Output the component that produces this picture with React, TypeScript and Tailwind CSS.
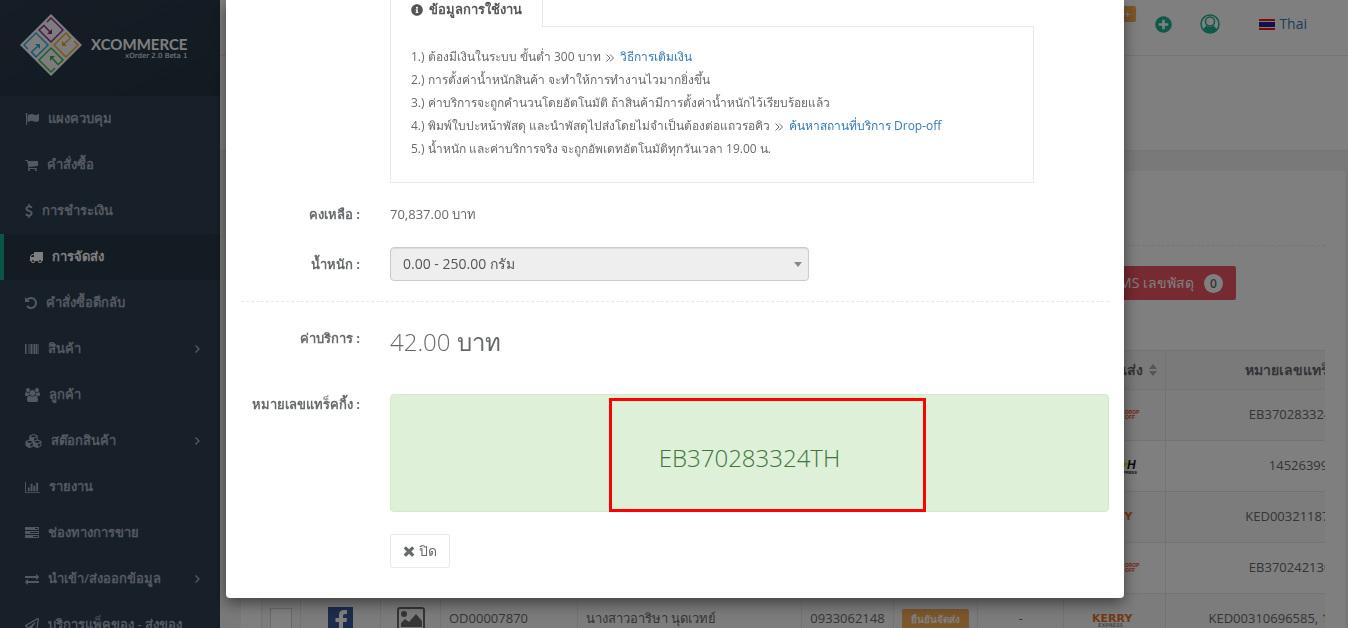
import React from 'react';
import { FaCubes, FaInfoCircle, FaPlusCircle, FaRegPaperPlane } from 'react-icons/fa';

interface MenuItem {
  label: string;
  icon: React.ReactNode;
  active?: boolean;
  expandable?: boolean;
}

interface ShippingRow {
  courier: 'dropoff' | 'flash' | 'kerry';
  tracking: string;
  order?: string;
  customer?: string;
  phone?: string;
  status?: string;
}

// Icon with a 1792 unit grid, cropped to its own width
function Glyph({ d, box = '0 0 1792 1792', className }: { d: string; box?: string; className: string }) {
  return (
    <svg viewBox={box} className={className} fill="currentColor" aria-hidden="true">
      <path d={d} />
    </svg>
  );
}

const paths = {
  flag: 'M320 256q0 72-64 110v1266q0 13-9.500 22.500t-22.500 9.500h-64q-13 0-22.500-9.500t-9.500-22.500v-1266q-64-38-64-110 0-53 37.500-90.500t90.500-37.500 90.500 37.500 37.500 90.500zm1472 64v763q0 25-12.500 38.500t-39.500 27.500q-215 116-369 116-61 0-123.500-22t-108.500-48-115.500-48-142.500-22q-192 0-464 146-17 9-33 9-26 0-45-19t-19-45v-742q0-32 31-55 21-14 79-43 236-120 421-120 107 0 200 29t219 88q38 19 88 19 54 0 117.500-21t110-47 88-47 54.500-21q26 0 45 19t19 45z',
  cart: 'M704 1536q0 52-38 90t-90 38-90-38-38-90 38-90 90-38 90 38 38 90zm896 0q0 52-38 90t-90 38-90-38-38-90 38-90 90-38 90 38 38 90zm128-1088v512q0 24-16.500 42.500t-40.500 21.500l-1044 122q13 60 13 70 0 16-24 64h920q26 0 45 19t19 45-19 45-45 19h-1024q-26 0-45-19t-19-45q0-11 8-31.500t16-36 21.500-40 15.500-29.500l-177-823h-204q-26 0-45-19t-19-45 19-45 45-19h256q16 0 28.500 6.500t19.500 15.500 13 24.500 8 26 5.500 29.500 4.500 26h1201q26 0 45 19t19 45z',
  dollar: 'M1362 1185q0 153-99.500 263.500t-258.500 136.500v175q0 14-9 23t-23 9h-135q-13 0-22.500-9.500t-9.500-22.500v-175q-66-9-127.500-31t-101.500-44.500-74-48-46.500-37.500-17.500-18q-17-21-2-41l103-135q7-10 23-12 15-2 24 9l2 2q113 99 243 125 37 8 74 8 81 0 142.500-43t61.500-122q0-28-15-53t-33.500-42-58.500-37.500-66-32-80-32.500q-39-16-61.500-25t-61.500-26.500-62.500-31-56.500-35.500-53.500-42.500-43.500-49-35.500-58-21-66.500-8.500-78q0-138 98-242t255-134v-180q0-13 9.500-22.500t22.500-9.500h135q14 0 23 9t9 23v176q57 6 110.500 23t87 33.500 63.500 37.500 39 29 15 14q17 18 5 38l-81 146q-8 15-23 16-14 3-27-7-3-3-14.500-12t-39-26.500-58.500-32-74.500-26-85.500-11.500q-95 0-155 43t-60 111q0 26 8.500 48t29.500 41.500 39.500 33 56 31 60.500 27 70 27.500q53 20 81 31.500t76 35 75.500 42.500 62 50 53 63.500 31.500 76.500 13 94z',
  truck: 'M640 1408q0-52-38-90t-90-38-90 38-38 90 38 90 90 38 90-38 38-90zm-384-512h384v-256h-158q-13 0-22 9l-195 195q-9 9-9 22v30zm1280 512q0-52-38-90t-90-38-90 38-38 90 38 90 90 38 90-38 38-90zm256-1088v1024q0 15-4 26.500t-13.500 18.500-16.500 11.500-23.500 6-22.500 2-25.500 0-22.500-.5q0 106-75 181t-181 75-181-75-75-181h-384q0 106-75 181t-181 75-181-75-75-181h-64q-3 0-22.500.5t-25.500 0-22.500-2-23.500-6-16.500-11.500-13.500-18.500-4-26.500q0-26 19-45t45-19v-320q0-8-.5-35t0-38 2.500-34.500 6.500-37 14-30.500 22.500-30l198-198q19-19 50.500-32t58.500-13h160v-192q0-26 19-45t45-19h1024q26 0 45 19t19 45z',
  undo: 'M1664 896q0 156-61 298t-164 245-245 164-298 61q-172 0-327-72.500t-264-204.500q-7-10-6.500-22.500t8.500-20.500l137-138q10-9 25-9 16 2 23 12 73 95 179 147t225 52q104 0 198.500-40.500t163.500-109.500 109.500-163.500 40.500-198.500-40.500-198.500-109.500-163.500-163.500-109.500-198.500-40.500q-98 0-188 35.500t-160 101.500l137 138q31 30 14 69-17 40-59 40h-448q-26 0-45-19t-19-45v-448q0-42 40-59 39-17 69 14l130 129q107-101 244.500-156.500t284.500-55.500q156 0 298 61t245 164 164 245 61 298z',
  barcode: 'M0 256h128v1280h-128zM192 256h64v1280h-64zM384 256h64v1280h-64zM576 256h64v1280h-64zM704 256h192v1280h-192zM960 256h64v1280h-64zM1088 256h192v1280h-192zM1344 256h192v1280h-192zM1600 256h64v1280h-64zM1728 256h64v1280h-64z',
  users: 'M657 896q-162 5-265 128h-134q-82 0-138-40.500t-56-118.500q0-353 124-353 6 0 43.500 21t97.500 42.500 119 21.500q67 0 133-23-5 37-5 66 0 139 81 256zm1071 637q0 120-73 189.500t-194 69.500h-874q-121 0-194-69.500t-73-189.500q0-53 3.500-103.500t14-109 26.500-108.500 43-97.500 62-81 85.500-53.500 111.500-20q10 0 43 21.500t73 48 107 48 135 21.500 135-21.500 107-48 73-48 43-21.500q61 0 111.500 20t85.500 53.500 62 81 43 97.500 26.500 108.500 14 109 3.500 103.500zm-1024-1277q0 106-75 181t-181 75-181-75-75-181 75-181 181-75 181 75 75 181zm704 384q0 159-112.500 271.500t-271.500 112.500-271.500-112.500-112.500-271.500 112.500-271.500 271.500-112.500 271.500 112.500 112.500 271.500zm576 225q0 78-56 118.500t-138 40.500h-134q-103-123-265-128 81-117 81-256 0-29-5-66 66 23 133 23 59 0 119-21.500t97.500-42.500 43.500-21q124 0 124 353zm-128-609q0 106-75 181t-181 75-181-75-75-181 75-181 181-75 181 75 75 181z',
  chart: 'M640 896v512h-256v-512h256zm384-512v1024h-256v-1024h256zm1024 1152v128h-2048v-1536h128v1408h1920zm-640-896v768h-256v-768h256zm384-384v1152h-256v-1152h256z',
  tasks: 'M1024 1408h640v-128h-640v128zm-384-512h1024v-128h-1024v128zm640-512h384v-128h-384v128zm512 832v256q0 26-19 45t-45 19h-1664q-26 0-45-19t-19-45v-256q0-26 19-45t45-19h1664q26 0 45 19t19 45zm0-512v256q0 26-19 45t-45 19h-1664q-26 0-45-19t-19-45v-256q0-26 19-45t45-19h1664q26 0 45 19t19 45zm0-512v256q0 26-19 45t-45 19h-1664q-26 0-45-19t-19-45v-256q0-26 19-45t45-19h1664q26 0 45 19t19 45z',
  exchange: 'M1792 1184v192q0 13-9.500 22.500t-22.500 9.500h-1376v192q0 13-9.500 22.500t-22.500 9.500q-12 0-24-10l-319-320q-9-9-9-22 0-14 9-23l320-320q9-9 23-9 13 0 22.500 9.500t9.500 22.500v192h1376q13 0 22.500 9.500t9.500 22.500zm0-544q0 14-9 23l-320 320q-9 9-23 9-13 0-22.500-9.500t-9.500-22.500v-192h-1376q-13 0-22.500-9.500t-9.500-22.500v-192q0-13 9.500-22.500t22.500-9.500h1376v-192q0-14 9-23t23-9q12 0 24 10l319 319q9 9 9 23z',
  times: 'M1490 1322q0 40-28 68l-136 136q-28 28-68 28t-68-28l-294-294-294 294q-28 28-68 28t-68-28l-136-136q-28-28-28-68t28-68l294-294-294-294q-28-28-28-68t28-68l136-136q28-28 68-28t68 28l294 294 294-294q28-28 68-28t68 28l136 136q28 28 28 68t-28 68l-294 294 294 294q28 28 28 68z',
};

const menu: MenuItem[] = [
  { label: 'แผงควบคุม', icon: <Glyph d={paths.flag} className="h-3.5 w-3.5" /> },
  { label: 'คำสั่งซื้อ', icon: <Glyph d={paths.cart} box="64 0 1664 1792" className="h-3.5 w-[13px]" /> },
  { label: 'การชำระเงิน', icon: <Glyph d={paths.dollar} box="384 0 1024 1792" className="h-3.5 w-2" /> },
  { label: 'การจัดส่ง', icon: <Glyph d={paths.truck} className="h-3.5 w-3.5" />, active: true },
  { label: 'คำสั่งซื้อตีกลับ', icon: <Glyph d={paths.undo} box="128 0 1536 1792" className="h-3.5 w-3" /> },
  { label: 'สินค้า', icon: <Glyph d={paths.barcode} className="h-3.5 w-3.5" />, expandable: true },
  { label: 'ลูกค้า', icon: <Glyph d={paths.users} box="64 0 1920 1792" className="h-3.5 w-[15px]" /> },
  { label: 'สต๊อกสินค้า', icon: <FaCubes className="h-4 w-[17px]" />, expandable: true },
  { label: 'รายงาน', icon: <Glyph d={paths.chart} box="0 0 2048 1792" className="h-[13px] w-[15px]" /> },
  { label: 'ช่องทางการขาย', icon: <Glyph d={paths.tasks} className="h-3.5 w-3.5" /> },
  { label: 'นำเข้า/ส่งออกข้อมูล', icon: <Glyph d={paths.exchange} className="h-3.5 w-3.5" />, expandable: true },
  { label: 'บริการแพ็คของ - ส่งของ', icon: <FaRegPaperPlane className="h-3.5 w-3.5" /> },
];

const rows: ShippingRow[] = [
  { courier: 'dropoff', tracking: 'EB370283324TH' },
  { courier: 'flash', tracking: '14526399' },
  { courier: 'kerry', tracking: 'KED00321187452' },
  { courier: 'dropoff', tracking: 'EB370242130TH' },
  {
    courier: 'kerry',
    tracking: 'KED00310696585, 145263991',
    order: 'OD00007870',
    customer: 'นางสาวอาริษา นุดเวทย์',
    phone: '0933062148',
    status: 'ยืนยันจัดส่ง',
  },
];

function Logo() {
  return (
    <svg viewBox="0 0 62 62" className="h-[62px] w-[62px] shrink-0" aria-hidden="true">
      <path d="M31 0 62 31 31 62 0 31z" fill="#fafafa" />
      <g fill="none" strokeWidth="1.400">
        <path d="M27 8 31 4 43 16 31 28 19 16 24 11.500 30 18" stroke="#92278f" />
        <path d="M54 27 58 31 46 43 34 31 46 19 50.500 24 44 30" stroke="#f7a823" />
        <path d="M8 35 4 31 16 19 28 31 16 43 11.500 38 18 32" stroke="#27a9e0" />
        <path d="M35 54 31 58 19 46 31 34 43 46 38 50.500 32 44" stroke="#39b54a" />
      </g>
      <path d="M32 15v5h-5z" fill="#92278f" />
      <path d="M42 27v5h5z" fill="#f7a823" />
      <path d="M20 35v-5h-5z" fill="#27a9e0" />
      <path d="M30 47v-5h5z" fill="#39b54a" />
    </svg>
  );
}

function Sidebar() {
  return (
    <aside className="w-[220px] shrink-0 overflow-hidden bg-[#2f4050]">
      <div className="flex h-24 items-center gap-[9px] bg-linear-to-br from-[#2a3b4b] to-[#243644] pr-[29px] pb-1.5 pl-5">
        <Logo />
        <div className="flex flex-col items-end pt-1.5 text-white">
          <span className="font-['Lato'] text-[15px] leading-4 font-bold">XCOMMERCE</span>
          <span className="font-['DejaVu_Sans'] text-[7px] leading-[9px]">xOrder 2.0 Beta 1</span>
        </div>
      </div>
      <nav>
        {menu.map(item => (
          <a
            key={item.label}
            href="#"
            className={`${
              item.active ? 'border-l-4 border-[#19aa8d] bg-[#293846] text-white' : 'text-[#a7b1c2]'
            } flex h-[46px] items-center gap-[9px] pr-5 pl-[25px] text-[13px] font-semibold whitespace-nowrap`}
          >
            <span className="shrink-0">{item.icon}</span>
            <span className="flex-1">{item.label}</span>
            {item.expandable && (
              <svg viewBox="0 0 5 8" className="h-2 w-[5px]" fill="none" stroke="currentColor" strokeWidth="1.300">
                <path d="M0.500 0.500 4 4 0.500 7.500" />
              </svg>
            )}
          </a>
        ))}
      </nav>
    </aside>
  );
}

function TopBar() {
  return (
    <header className="flex h-14 items-start justify-end border-b border-[#e7eaec] bg-white pr-[41px] text-[#1ab394]">
      <span className="mt-1.5 mr-[19px] rounded-xs bg-[#f8ac59] px-1.5 text-[10px] leading-4 font-semibold text-white">99+</span>
      <div className="flex h-12 items-center">
        <button aria-label="เพิ่ม" className="mr-7">
          <FaPlusCircle className="h-[17px] w-[17px]" />
        </button>
        <button aria-label="บัญชี" className="mr-[39px]">
          <svg viewBox="0 0 20 20" className="h-5 w-5">
            <circle cx="10" cy="10" r="9" fill="none" stroke="currentColor" strokeWidth="1.500" />
            <circle cx="10" cy="7.500" r="4.500" fill="none" stroke="currentColor" strokeWidth="1.500" />
            <path d="M3 15.500 6.300 11.500Q10 14.500 13.700 11.500L17 15.500Q10 22 3 15.500z" fill="currentColor" />
          </svg>
        </button>
        <a href="#" className="flex items-center gap-1 text-sm text-[#337ab7]">
          <svg viewBox="0 0 16 11" className="h-[11px] w-4">
            <path d="M0 0h16v11H0z" fill="#f11" />
            <path d="M0 2h16v7H0z" fill="#fff" />
            <path d="M0 3h16v5H0z" fill="#229" />
          </svg>
          Thai
        </a>
      </div>
    </header>
  );
}

function CourierLogo({ courier }: { courier: ShippingRow['courier'] }) {
  if (courier === 'dropoff') {
    return (
      <svg viewBox="0 0 50 18" className="mx-auto h-[18px] w-[50px] overflow-visible">
        <path d="M28 5h6v3h-6zM28 10h5v2h-5z" fill="#23368f" />
        <g fill="#f04e23" fontFamily="Liberation Sans, sans-serif" fontWeight="bold" fontSize="5">
          <text x="35" y="8">DROP</text>
          <text x="35" y="13">OFF</text>
        </g>
      </svg>
    );
  }
  if (courier === 'flash') {
    return (
      <svg viewBox="0 0 50 18" className="mx-auto h-[18px] w-[50px] overflow-visible">
        <path d="M38 2 31 9h3l-2 4 6-7h-3z" fill="#e8dc2a" />
        <g fill="#111" fontFamily="Liberation Sans, sans-serif" fontWeight="bold" fontStyle="italic">
          <text x="37" y="12" fontSize="12">H</text>
          <text x="28" y="17" fontSize="4">EXPRESS</text>
        </g>
      </svg>
    );
  }
  return (
    <svg viewBox="0 0 50 18" className="mx-auto h-[18px] w-[50px]" fontFamily="DejaVu Sans, sans-serif" fontWeight="bold">
      <text x="2" y="12" fontSize="11" fill="#e8702a">KERRY</text>
      <text x="8" y="17" fontSize="5" fill="#999">EXPRESS</text>
    </svg>
  );
}

function ShippingTable() {
  return (
    <div className="overflow-hidden">
      <table className="w-[1170px] table-fixed border-collapse border border-[#e7e7e7] text-center text-[13px]">
        <colgroup>
          <col className="w-[39px]" />
          <col className="w-20" />
          <col className="w-[60px]" />
          <col className="w-[137px]" />
          <col className="w-56" />
          <col className="w-[92px]" />
          <col className="w-[84px]" />
          <col className="w-[86px]" />
          <col className="w-[102px]" />
          <col className="w-[266px]" />
        </colgroup>
        <thead className="bg-[#f5f5f6] text-sm">
          <tr className="h-[39px]">
            <th colSpan={8} />
            <th className="border border-[#e7e7e7] pr-2">
              <span className="flex items-center justify-end gap-1.5">
                ขนส่ง
                <svg viewBox="0 0 8 12" className="h-3 w-2" fill="#aaa">
                  <path d="M4 0 8 5H0zM4 12 8 7H0z" />
                </svg>
              </span>
            </th>
            <th className="border border-[#e7e7e7]">หมายเลขแทร็คกิ้ง</th>
          </tr>
        </thead>
        <tbody>
          {rows.map(row => (
            <tr key={row.tracking} className="h-[51px] odd:bg-[#f9f9f9] [&>td]:border [&>td]:border-[#e7e7e7]">
              <td>
                {row.order && (
                  <input
                    type="checkbox"
                    aria-label={row.order}
                    className="mx-auto block h-[22px] w-[22px] appearance-none border border-[#d2d2d2] bg-white"
                  />
                )}
              </td>
              <td>
                {row.order && (
                  <svg viewBox="0 0 25 25" className="mx-auto h-[25px] w-[25px]">
                    <path d="M0 0h25v25H0z" fill="#3b5998" />
                    <path d="M11 25V15H7.500v-4H11V8q0-5 5-5h3v4h-2q-2 0-2 2v2h4l-.5 4H15v10z" fill="#fff" />
                  </svg>
                )}
              </td>
              <td>
                {row.order && (
                  <svg viewBox="0 0 28 24" className="mx-auto h-6 w-7" fill="#676a6c">
                    <rect x="1" y="1" width="26" height="22" rx="2" fill="none" stroke="#676a6c" strokeWidth="2" />
                    <circle cx="7" cy="7" r="3" />
                    <path d="M4 20v-4l4-4 4 3 7-8 6 7v6z" />
                  </svg>
                )}
              </td>
              <td className="pl-2 text-left">{row.order}</td>
              <td className="pl-2 text-left">{row.customer}</td>
              <td>{row.phone}</td>
              <td>
                {row.status && (
                  <span className="mx-2 block rounded-xs bg-[#f8ac59] text-[10px] leading-5 font-semibold text-white">{row.status}</span>
                )}
              </td>
              <td>{row.order && '-'}</td>
              <td>
                <CourierLogo courier={row.courier} />
              </td>
              <td className="whitespace-nowrap">{row.tracking}</td>
            </tr>
          ))}
        </tbody>
      </table>
    </div>
  );
}

function DoubleArrow() {
  return (
    <svg viewBox="0 0 8 8" className="mr-1.5 ml-0.5 inline h-2 w-2 align-middle" fill="none" stroke="currentColor">
      <path d="M0.500 0.500 4 4 0.500 7.500M4 0.500 7.500 4 4 7.500" />
    </svg>
  );
}

function TrackingModal() {
  return (
    <div className="fixed inset-0 flex items-start justify-center bg-black/50 pl-0.5">
      <div
        role="dialog"
        aria-modal="true"
        className="w-full max-w-[898px] rounded-b-sm bg-white px-[15px] pb-[30px] shadow-[0_5px_15px_rgba(0,0,0,0.5)]"
      >
        <div className="mr-[75px] ml-[149px]">
          <div role="tablist" className="flex">
            <button
              role="tab"
              aria-selected="true"
              className="z-10 -mb-px flex h-[27px] items-center gap-1.5 border-x border-[#e7eaec] bg-white px-5 pb-2 text-[13px] font-semibold text-[#555]"
            >
              <FaInfoCircle className="h-3 w-3" />
              ข้อมูลการใช้งาน
            </button>
          </div>
          <div className="border border-[#e7eaec] px-5 pt-[18px] pb-[22px] text-xs leading-[23px] whitespace-nowrap">
            <p>
              1.) ต้องมีเงินในระบบ ขั้นต่ำ 300 บาท <DoubleArrow />
              <a href="#" className="text-[#337ab7]">วิธีการเติมเงิน</a>
            </p>
            <p>2.) การตั้งค่าน้ำหนักสินค้า จะทำให้การทำงานไวมากยิ่งขึ้น</p>
            <p>3.) ค่าบริการจะถูกคำนวนโดยอัตโนมัติ ถ้าสินค้ามีการตั้งค่าน้ำหนักไว้เรียบร้อยแล้ว</p>
            <p>
              4.) พิมพ์ใบปะหน้าพัสดุ และนำพัสดุไปส่งโดยไม่จำเป็นต้องต่อแถวรอคิว <DoubleArrow />
              <a href="#" className="text-[#337ab7]">ค้นหาสถานที่บริการ Drop-off</a>
            </p>
            <p>5.) น้ำหนัก และค่าบริการจริง จะถูกอัพเดทอัตโนมัติทุกวันเวลา 19.00 น.</p>
          </div>
        </div>

        <div className="mt-[21px] flex gap-[30px] leading-5">
          <span className="w-[119px] shrink-0 text-right font-bold">คงเหลือ :</span>
          <span>70,837.00 บาท</span>
        </div>

        <div className="mt-[23px] flex items-center gap-[30px]">
          <label htmlFor="weight" className="w-[119px] shrink-0 text-right leading-5 font-bold">น้ำหนัก :</label>
          <div className="relative w-[419px]">
            <select
              id="weight"
              disabled
              className="block h-[34px] w-full appearance-none rounded-sm border border-[#ccc] bg-[#eee] px-3 text-sm text-[#555] opacity-100 shadow-[inset_0_1px_1px_rgba(0,0,0,0.08)]"
            >
              <option>0.00 - 250.00 กรัม</option>
            </select>
            <svg viewBox="0 0 8 5" className="pointer-events-none absolute top-[15px] right-[7px] h-[5px] w-2" fill="#888">
              <path d="M0 0h8L4 5z" />
            </svg>
          </div>
        </div>

        <hr className="mt-5 border-dashed border-[#e7eaec]" />

        <div className="mt-[26px] flex gap-[30px]">
          <span className="w-[119px] shrink-0 text-right leading-5 font-bold">ค่าบริการ :</span>
          <span className="text-2xl leading-7 font-light">
            42.00 <span className="font-medium">บาท</span>
          </span>
        </div>

        <div className="mt-[38px] flex gap-[30px]">
          <span className="w-[119px] shrink-0 text-right leading-5 font-bold whitespace-nowrap">หมายเลขแทร็คกิ้ง :</span>
          <div className="relative flex h-[118px] flex-1 items-center justify-center rounded-sm border border-[#d6e9c6] bg-[#dff0d8] pt-2.5 text-2xl font-light text-[#3c763d]">
            EB370283324TH
            <div className="absolute top-[3px] left-[218px] h-[114px] w-[317px] border-3 border-[#f00]" />
          </div>
        </div>

        <button className="mt-[22px] ml-[149px] flex h-[34px] items-center gap-1 rounded-xs border border-[#e7eaec] px-3 text-sm">
          <Glyph d={paths.times} box="256 192 1280 1408" className="h-3 w-3" />
          ปิด
        </button>
      </div>
    </div>
  );
}

function App() {
  return (
    <div className="flex h-screen overflow-hidden bg-[#f3f3f4] font-['Open_Sans','Noto_Sans',sans-serif] text-[13px] text-[#676a6c]">
      <Sidebar />
      <main className="min-w-0 flex-1">
        <TopBar />
        <div className="h-[95px] border-b border-[#e7eaec] bg-white" />
        <section className="mt-5 mr-[3px] ml-[21px] bg-white px-5 pb-5">
          <div className="h-[75px] border-b border-dashed border-[#e7eaec]" />
          <div className="mt-5 mb-[50px] flex justify-end pr-[89px]">
            <button className="flex h-[34px] items-center gap-2.5 rounded-xs bg-[#ed5565] px-[13px] text-sm text-white">
              ส่ง SMS เลขพัสดุ
              <span className="h-[19px] w-[19px] rounded-full bg-white text-center text-xs leading-[19px] font-semibold text-[#676a6c]">0</span>
            </button>
          </div>
          <ShippingTable />
        </section>
      </main>
      <TrackingModal />
    </div>
  );
}

export default App;
